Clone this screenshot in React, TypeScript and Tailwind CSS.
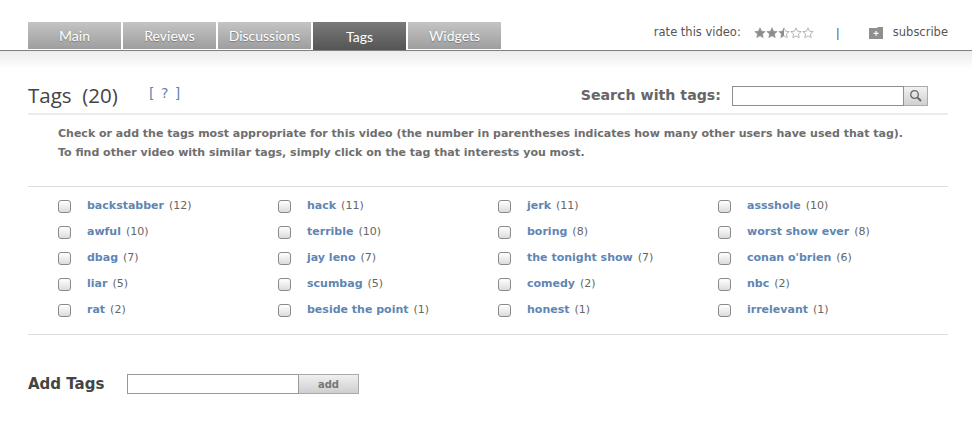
import React from "react";

const tags: [string, number][] = [
  ["backstabber", 12], ["hack", 11], ["jerk", 11], ["assshole", 10],
  ["awful", 10], ["terrible", 10], ["boring", 8], ["worst show ever", 8],
  ["dbag", 7], ["jay leno", 7], ["the tonight show", 7], ["conan o'brien", 6],
  ["liar", 5], ["scumbag", 5], ["comedy", 2], ["nbc", 2],
  ["rat", 2], ["beside the point", 1], ["honest", 1], ["irrelevant", 1],
];

const tabs = ["Main", "Reviews", "Discussions", "Tags", "Widgets"];

function Star({ fill }: { fill: "full" | "half" | "none" }) {
  const d = "M6 .8l1.5 3.4 3.7.4-2.8 2.4.8 3.6L6 8.8l-3.2 1.8.8-3.6L.8 4.6l3.7-.4z";
  return (
    <svg width="12" height="12" viewBox="0 0 12 12">
      <path d={d} fill="none" stroke="#a3a3a3" strokeWidth="0.8" />
      {fill === "full" && <path d={d} fill="#8c8c8c" />}
      {fill === "half" && <path d="M6 .8v8L2.8 10.6l.8-3.6L.8 4.6l3.7-.4z" fill="#8c8c8c" />}
    </svg>
  );
}

export default function App() {
  return (
    <div className="w-[972px] h-[424px] bg-white overflow-hidden font-['DejaVu_Sans',sans-serif] text-[#555]">
      <div className="pt-[22px] h-[51px] border-b border-[#808080] box-border flex justify-between px-[24px] pl-[28px]">
        <div className="flex gap-[2px] font-['Lato',sans-serif] text-[14px] text-white">
          {tabs.map((t) => (
            <div
              key={t}
              className={
                t === "Tags"
                  ? "w-[93px] h-[28px] flex items-center justify-center bg-gradient-to-b from-[#7a7a7a] to-[#555]"
                  : "w-[93px] h-[27px] flex items-center justify-center bg-gradient-to-b from-[#c4c4c4] to-[#9e9e9e] [text-shadow:0_1px_1px_#777]"
              }
            >
              {t}
            </div>
          ))}
        </div>
        <div className="flex items-center h-[21px] text-[11.5px] text-[#555]">
          <span className="-ml-[2px]">rate this video:</span>
          <span className="flex ml-[13px]">
            <Star fill="full" />
            <Star fill="full" />
            <Star fill="half" />
            <Star fill="none" />
            <Star fill="none" />
          </span>
          <span className="ml-[22px] font-['Liberation_Sans',sans-serif] text-[12px] w-[4px] text-center">|</span>
          <svg width="14" height="12" viewBox="0 0 14 12" className="ml-[29px]">
            <path d="M0 1h8l1-1h5v12H0z" fill="#8f8f8f" />
            <path d="M6.500 4h1.200v1.800h1.800V7H7.700v1.800H6.500V7H4.700V5.800h1.800z" fill="#fff" />
          </svg>
          <span className="ml-[10px]">subscribe</span>
        </div>
      </div>
      <div className="h-[18px] bg-gradient-to-b from-[#ececec] to-white" />

      <div className="mx-[24px] ml-[28px]">
        <div className="h-[46px] border-b-2 border-[#ececec] flex items-center pt-[9px] box-border">
          <span className="text-[20.5px] text-[#444] w-[121px] whitespace-pre -mt-[1px] font-['Open_Sans',sans-serif]">Tags  (20)</span>
          <span className="text-[14px] text-[#5c86b0] whitespace-pre tracking-[1px] -mt-[5px]">[ ? ]</span>
          <span className="ml-auto text-[14.2px] font-bold text-[#666]">Search with tags:</span>
          <div className="flex ml-[11px] mr-[20px] h-[20px]">
            <div className="w-[172px] border border-[#8f8f8f] bg-white" />
            <div className="w-[24px] border border-l-0 border-[#aaa] bg-gradient-to-b from-[#f2f2f2] to-[#d0d0d0] flex items-center justify-center">
              <svg width="13" height="13" viewBox="0 0 13 13" fill="none" stroke="#666" strokeWidth="1.3">
                <circle cx="5.500" cy="5.500" r="3.800" />
                <path d="M8.500 8.500l3.500 3.500" strokeWidth="1.800" />
              </svg>
            </div>
          </div>
        </div>

        <div className="pl-[30px] pt-[9px] text-[11px] font-bold leading-[19px] text-[#6e6e6e] whitespace-nowrap">
          <p>Check or add the tags most appropriate for this video (the number in parentheses indicates how many other users have used that tag).</p>
          <p>To find other video with similar tags, simply click on the tag that interests you most.</p>
        </div>

        <div className="mt-[24px] border-t border-b border-[#dcdcdc] h-[149px] box-border pt-[6px] pl-[30px] grid grid-cols-[220px_220px_220px_220px] auto-rows-[26px] text-[11px]">
          {tags.map(([name, n]) => (
            <div key={name} className="flex items-center whitespace-nowrap">
              <span className="w-[13px] h-[13px] rounded-[3px] border border-[#8a8a8a] bg-gradient-to-b from-white to-[#dcdcdc]" />
              <span className="ml-[16px] font-bold text-[#5f86b3]">{name}</span>
              <span className="ml-[5px] text-[#666]">({n})</span>
            </div>
          ))}
        </div>

        <div className="flex items-center mt-[38px]">
          <span className="text-[15px] font-bold text-[#444] w-[99px]">Add Tags</span>
          <div className="flex h-[20px]">
            <div className="w-[172px] border border-[#999] bg-white" />
            <div className="w-[60px] border border-l-0 border-[#aaa] bg-gradient-to-b from-[#f0f0f0] to-[#cfcfcf] flex items-center justify-center text-[10px] font-bold text-[#777]">
              add
            </div>
          </div>
        </div>
      </div>
    </div>
  );
}
